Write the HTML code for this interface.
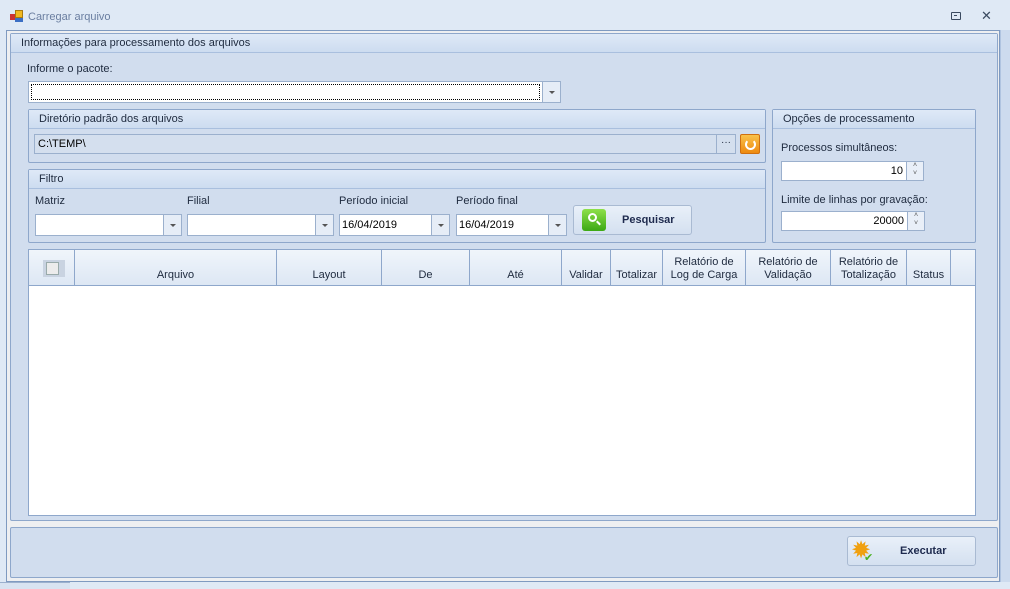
<!DOCTYPE html>
<html><head><meta charset="utf-8"><style>
*{box-sizing:border-box;margin:0;padding:0}
body{width:1010px;height:589px;overflow:hidden;background:#dfe9f5;font-family:"Liberation Sans","DejaVu Sans",sans-serif;font-size:11px;color:#1e2a3e;position:relative}
.a{position:absolute}
.grp{position:absolute;border:1px solid #8ea7cb;background:#d1ddee;border-radius:2px}
.hdr{position:absolute;left:0;right:0;top:0;height:19px;background:linear-gradient(#dfe9f7,#cddcf0);border-bottom:1px solid #a9bfde;padding:3px 0 0 10px;font-size:11px}
.box{position:absolute;background:#fff;border:1px solid #9bb0cd}
.dd{position:absolute;top:0;bottom:0;right:0;width:18px;border-left:1px solid #9bb0cd;background:#e6edf7}
.dd:after{content:"";position:absolute;left:6px;top:9px;border:3px solid transparent;border-top:3px solid #555;}
.lbl{position:absolute;font-size:11px}
.th{position:absolute;top:0;height:35px;border-right:1px solid #8ea7cb;text-align:center;font-size:11px;line-height:13px;display:flex;align-items:flex-end;justify-content:center;padding-bottom:3px}
.btn{position:absolute;border:1px solid #a9bad2;border-radius:3px;background:linear-gradient(#e9f0f9,#d4e0f0);font-weight:bold;font-size:11px;color:#1e2a4e}
.spin{position:absolute;top:0;bottom:0;right:0;width:17px;border-left:1px solid #9bb0cd;background:#e9eff8;font-size:7px;color:#555;text-align:center;line-height:8px}
</style></head><body>
<div class="a" style="left:10px;top:10px;width:14px;height:13px">
<div class="a" style="left:0;top:4px;width:5px;height:6px;background:#c33"></div>
<div class="a" style="left:5px;top:0;width:8px;height:8px;background:#f0b820;border:1px solid #a87a10"></div>
<div class="a" style="left:5px;top:8px;width:8px;height:4px;background:#3c6fc4"></div></div>
<div class="lbl" style="left:28px;top:11px;color:#6a7ea0">Carregar arquivo</div>
<div class="a" style="left:951px;top:12px;width:10px;height:8px;border:1.5px solid #3a4a60;border-radius:1px"><div class="a" style="left:2px;top:2px;width:3px;height:1px;background:#3a4a60"></div></div>
<div class="lbl" style="left:981px;top:8px;font-size:13px;color:#3a4a60">✕</div>
<div class="a" style="left:6px;top:30px;width:994px;height:552px;border:1px solid #7f9ac0;background:#eeeff1"></div>
<div class="a" style="left:1000px;top:30px;width:10px;height:552px;background:#cddbee;border-left:1px solid #b0c4e0"></div>
<div class="a" style="left:0;top:582px;width:70px;height:7px;border-top:1px solid #9bb0cd;background:#d8e3f1"></div>

<div class="grp" style="left:10px;top:33px;width:988px;height:488px">
<div class="hdr">Informações para processamento dos arquivos</div></div>
<div class="lbl" style="left:27px;top:63px">Informe o pacote:</div>
<div class="box" style="left:28px;top:81px;width:533px;height:22px"><div class="a" style="left:2px;top:2px;right:20px;bottom:2px;border:1px dotted #000"></div><div class="dd"></div></div>

<div class="grp" style="left:28px;top:109px;width:738px;height:54px"><div class="hdr">Diretório padrão dos arquivos</div></div>
<div class="box" style="left:34px;top:134px;width:702px;height:20px;background:#d4dfee"><div class="lbl" style="left:3px;top:3px;color:#000">C:\TEMP\</div>
<div class="a" style="right:0;top:0;bottom:0;width:19px;border-left:1px solid #9bb0cd;text-align:center;font-size:10px;line-height:16px">···</div></div>
<div class="a" style="left:740px;top:134px;width:20px;height:20px;background:linear-gradient(#f9c24a,#ee8a10);border:1px solid #d07010;border-radius:2px"><div class="a" style="left:4px;top:4px;width:11px;height:11px;border:2.5px solid #fff;border-radius:50%;border-top-color:transparent"></div></div>

<div class="grp" style="left:28px;top:169px;width:738px;height:74px"><div class="hdr">Filtro</div></div>
<div class="lbl" style="left:35px;top:195px">Matriz</div>
<div class="lbl" style="left:187px;top:195px">Filial</div>
<div class="lbl" style="left:339px;top:195px">Período inicial</div>
<div class="lbl" style="left:456px;top:195px">Período final</div>
<div class="box" style="left:35px;top:214px;width:147px;height:22px"><div class="dd"></div></div>
<div class="box" style="left:187px;top:214px;width:147px;height:22px"><div class="dd"></div></div>
<div class="box" style="left:339px;top:214px;width:111px;height:22px"><div class="lbl" style="left:2px;top:4px;color:#000">16/04/2019</div><div class="dd"></div></div>
<div class="box" style="left:456px;top:214px;width:111px;height:22px"><div class="lbl" style="left:2px;top:4px;color:#000">16/04/2019</div><div class="dd"></div></div>
<div class="btn" style="left:573px;top:205px;width:119px;height:30px">
<div class="a" style="left:8px;top:3px;width:24px;height:22px;background:linear-gradient(#8ee04a,#3ca814);border-radius:3px"><div class="a" style="left:6px;top:4px;width:9px;height:9px;border:2px solid #fff;border-radius:50%"></div><div class="a" style="left:14px;top:13px;width:5px;height:2px;background:#fff;transform:rotate(45deg)"></div></div>
<div class="a" style="left:48px;top:8px">Pesquisar</div></div>

<div class="grp" style="left:772px;top:109px;width:204px;height:134px"><div class="hdr">Opções de processamento</div></div>
<div class="lbl" style="left:781px;top:142px">Processos simultâneos:</div>
<div class="box" style="left:781px;top:161px;width:143px;height:20px"><div class="lbl" style="right:20px;top:3px;color:#000">10</div><div class="spin">˄<br>˅</div></div>
<div class="lbl" style="left:781px;top:194px">Limite de linhas por gravação:</div>
<div class="box" style="left:781px;top:211px;width:144px;height:20px"><div class="lbl" style="right:20px;top:3px;color:#000">20000</div><div class="spin">˄<br>˅</div></div>

<div class="a" style="left:28px;top:249px;width:948px;height:267px;background:#fff;border:1px solid #8ea7cb">
<div class="a" style="left:0;top:0;right:0;height:36px;background:linear-gradient(#f0f5fb,#dde7f4);border-bottom:1px solid #8ea7cb">
<div class="th" style="left:0;width:46px"><div class="a" style="left:14px;top:10px;width:22px;height:17px;background:#c9d3e1"><div class="a" style="left:3px;top:2px;width:13px;height:13px;border:1px solid #9aa;background:#ececec"></div></div></div>
<div class="th" style="left:46px;width:202px">Arquivo</div>
<div class="th" style="left:248px;width:105px">Layout</div>
<div class="th" style="left:353px;width:88px">De</div>
<div class="th" style="left:441px;width:92px">Até</div>
<div class="th" style="left:533px;width:49px">Validar</div>
<div class="th" style="left:582px;width:52px">Totalizar</div>
<div class="th" style="left:634px;width:83px">Relatório de<br>Log de Carga</div>
<div class="th" style="left:717px;width:85px">Relatório de<br>Validação</div>
<div class="th" style="left:802px;width:76px">Relatório de<br>Totalização</div>
<div class="th" style="left:878px;width:44px">Status</div>
</div></div>

<div class="grp" style="left:10px;top:527px;width:988px;height:51px"></div>
<div class="btn" style="left:847px;top:536px;width:129px;height:30px">
<div class="a" style="left:3px;top:2px;font-size:24px;line-height:24px;color:#f0a010">✹</div>
<div class="a" style="left:16px;top:14px;font-size:11px;color:#4ab020;font-weight:bold">✔</div>
<div class="a" style="left:52px;top:8px">Executar</div></div>
</body></html>
